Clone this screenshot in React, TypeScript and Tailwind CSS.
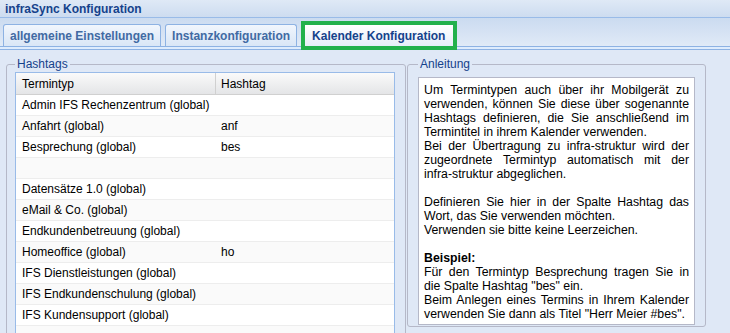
const rows: [string, string][] = [
  ["Admin IFS Rechenzentrum (global)", ""],
  ["Anfahrt (global)", "anf"],
  ["Besprechung (global)", "bes"],
  ["", ""],
  ["Datensätze 1.0 (global)", ""],
  ["eMail & Co. (global)", ""],
  ["Endkundenbetreuung (global)", ""],
  ["Homeoffice (global)", "ho"],
  ["IFS Dienstleistungen (global)", ""],
  ["IFS Endkundenschulung (global)", ""],
  ["IFS Kundensupport (global)", ""],
  ["", ""],
];

function Tab({ label }: { label: string }) {
  return (
    <div className="flex h-[22px] items-center rounded-t-[3px] border border-b-0 border-[#8db2e3] bg-gradient-to-b from-[#f1f6fd] to-[#d9e6f6] px-[6px] text-[12px] font-bold text-[#416aa3]">
      {label}
    </div>
  );
}

export default function App() {
  return (
    <div className="h-[333px] w-[730px] overflow-hidden bg-[#dfe8f6] font-['Liberation_Sans',Arial,sans-serif] text-[12px] text-black">
      {/* title */}
      <div className="flex h-[18px] items-center border-b border-[#99bbe8] bg-gradient-to-b from-[#dfe9f6] to-[#cddcf0] pl-[5px] text-[12px] font-bold leading-none text-[#15428b]">
        infraSync Konfiguration
      </div>

      {/* tabs */}
      <div className="flex h-[29px] items-end gap-[4px] border-b border-[#8db2e3] bg-gradient-to-b from-[#cbdbf0] to-[#e0eaf7] pl-[3px]">
        <Tab label="allgemeine Einstellungen" />
        <Tab label="Instanzkonfiguration" />
        <div className="relative z-10 -mb-[4px] h-[29px] border-[4px] border-[#22b14c]">
          <div className="flex h-full items-center bg-gradient-to-b from-[#ffffff] to-[#e6eef9] pl-[7px] pr-[8px] text-[12px] font-bold text-[#15428b]">
            Kalender Konfiguration
          </div>
        </div>
      </div>
      <div className="h-[3px] border-b border-[#8db2e3] bg-[#deecfd]" />

      {/* body */}
      <div className="flex pl-[6px] pt-[7px]">
        <fieldset className="w-[400px] shrink-0 rounded-[3px] border border-[#b5b8c8] pb-[10px] pl-[8px] pr-[10px] pt-[1px]">
          <legend className="px-[2px] text-[12px] leading-[14px] text-[#15428b]">Hashtags</legend>
          <div className="border border-[#99bbe8] bg-white">
            <div className="flex h-[22px] border-b border-[#d0d0d0] bg-gradient-to-b from-[#fafafa] to-[#e4e5e7]">
              <div className="flex w-[200px] items-center border-r border-[#d0d0d0] pl-[6px]">Termintyp</div>
              <div className="flex flex-1 items-center pl-[5px]">Hashtag</div>
            </div>
            {rows.map(([typ, tag], i) => (
              <div
                key={i}
                className={`flex h-[21px] border-b border-[#ededed] ${i % 2 === 1 ? "bg-[#fafafa]" : "bg-white"}`}
              >
                <div className="flex w-[200px] items-center pl-[6px]">{typ}</div>
                <div className="flex flex-1 items-center pl-[5px]">{tag}</div>
              </div>
            ))}
          </div>
        </fieldset>

        <fieldset className="ml-[1px] h-[270px] w-[299px] shrink-0 rounded-[3px] border border-[#b5b8c8] pb-[1px] pl-[10px] pr-[10px] pt-[6px]">
          <legend className="px-[2px] text-[12px] leading-[14px] text-[#15428b]">Anleitung</legend>
          <div className="h-[248px] border border-[#b5b8c8] bg-white p-[5px] text-justify text-[12.3px] leading-[14px]">
            Um Termintypen auch über ihr Mobilgerät zu verwenden, können Sie diese über sogenannte
            Hashtags definieren, die Sie anschließend im Termintitel in ihrem Kalender verwenden.
            <br />
            Bei der Übertragung zu infra-struktur wird der zugeordnete Termintyp automatisch mit der{" "}
            <span className="whitespace-nowrap">infra-struktur</span> abgeglichen.
            <br />
            <br />
            Definieren Sie hier in der Spalte Hashtag das Wort, das Sie verwenden möchten.
            <br />
            Verwenden sie bitte keine Leerzeichen.
            <br />
            <br />
            <b>Beispiel:</b>
            <br />
            Für den Termintyp Besprechung tragen Sie in die Spalte Hashtag "bes" ein.
            <br />
            Beim Anlegen eines Termins in Ihrem Kalender verwenden Sie dann als Titel "Herr Meier #bes".
          </div>
        </fieldset>
      </div>
    </div>
  );
}
